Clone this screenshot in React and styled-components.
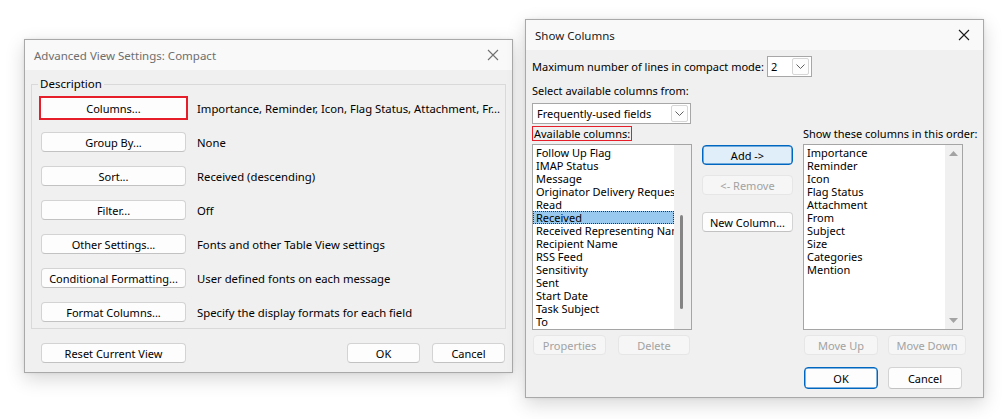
import React from 'react';
import styled, {createGlobalStyle, css} from 'styled-components';

const GlobalStyle = createGlobalStyle`
  * { box-sizing: border-box; }
  body {
    margin: 0;
    background: #ffffff;
    font-family: "Noto Sans", "Open Sans", sans-serif;
    font-size: 11px;
    color: #000;
  }
`;

const SETTINGS = [
  {label: 'Columns...', summary: 'Importance, Reminder, Icon, Flag Status, Attachment, Fr...', marked: true},
  {label: 'Group By...', summary: 'None'},
  {label: 'Sort...', summary: 'Received (descending)'},
  {label: 'Filter...', summary: 'Off'},
  {label: 'Other Settings...', summary: 'Fonts and other Table View settings'},
  {label: 'Conditional Formatting...', summary: 'User defined fonts on each message'},
  {label: 'Format Columns...', summary: 'Specify the display formats for each field'},
];

const AVAILABLE = [
  'Follow Up Flag',
  'IMAP Status',
  'Message',
  'Originator Delivery Requested',
  'Read',
  'Received',
  'Received Representing Name',
  'Recipient Name',
  'RSS Feed',
  'Sensitivity',
  'Sent',
  'Start Date',
  'Task Subject',
  'To',
];

const SHOWN = [
  'Importance',
  'Reminder',
  'Icon',
  'Flag Status',
  'Attachment',
  'From',
  'Subject',
  'Size',
  'Categories',
  'Mention',
];

const Desktop = styled.div`
  position: relative;
  width: 1008px;
  height: 419px;
  overflow: hidden;
  background: #fff;
`;

// dialogs are windows on the desktop, so they get placed by coordinates
const Window = styled.div`
  position: absolute;
  left: ${p => p.$left}px;
  top: ${p => p.$top}px;
  width: ${p => p.$width}px;
  height: ${p => p.$height}px;
  display: flex;
  flex-direction: column;
  background: #f0f0f0;
  border: 1px solid #a9a9a9;
  box-shadow: 0 6px 18px rgba(0, 0, 0, 0.16), 0 0 3px rgba(0, 0, 0, 0.08);
`;

const TitleBar = styled.div`
  height: 30px;
  flex: none;
  display: flex;
  align-items: center;
  justify-content: space-between;
  padding: 0 9px;
  background: #f9f9f9;
  color: ${p => (p.$inactive ? '#6e6e6e' : '#1a1a1a')};
  font-size: 11.5px;
`;

const CloseGlyph = styled.svg`
  width: 12px;
  height: 12px;
  margin-right: 4px;
  stroke: ${p => (p.$inactive ? '#707070' : '#1a1a1a')};
`;

const Close = ({inactive}) => (
  <CloseGlyph $inactive={inactive} viewBox="0 0 12 12">
    <path d="M1 1 L11 11 M11 1 L1 11" strokeWidth="1.1" fill="none" />
  </CloseGlyph>
);

const PushButton = styled.button`
  font: inherit;
  font-size: 11px;
  height: ${p => p.$h || 20}px;
  width: ${p => p.$w}px;
  margin-top: ${p => p.$mt || 0}px;
  padding: 0;
  flex: none;
  color: #000;
  background: #fdfdfd;
  border: 1px solid #d3d3d3;
  border-bottom-color: #c2c2c2;
  border-radius: 4px;
  line-height: 1;

  ${p =>
    p.$disabled &&
    css`
      color: #a2a2a2;
      background: #f6f6f6;
      border-color: #e6e6e6;
    `}

  ${p =>
    p.$default &&
    css`
      border: 1px solid #0067c0;
      box-shadow: inset 0 0 0 0.5px #0067c0;
    `}

  ${p =>
    p.$hover &&
    css`
      background: #e0eef9;
    `}

  ${p =>
    p.$marked &&
    css`
      outline: 2px solid #e51e2a;
      outline-offset: 0;
      border-radius: 0;
      border-color: #fff;
    `}
`;

/* ---------- Advanced View Settings ---------- */

const LeftBody = styled.div`
  flex: 1;
  display: flex;
  flex-direction: column;
  padding: 6px 6px 0 6px;
`;

const GroupBox = styled.fieldset`
  margin: 0;
  padding: 0;
  border: 1px solid #d9d9d9;
  min-width: 0;
`;

const Legend = styled.legend`
  margin-left: 6px;
  padding: 0 2px;
  line-height: 16px;
  font-size: 11.5px;
`;

const SettingList = styled.div`
  display: flex;
  flex-direction: column;
  gap: 14px;
  padding: 6px 0 6px 9px;
`;

const SettingRow = styled.div`
  display: flex;
  align-items: center;
  gap: 11px;
`;

const Summary = styled.span`
  white-space: nowrap;
  font-size: 11.3px;
`;

const LeftFooter = styled.div`
  display: flex;
  align-items: center;
  margin-top: 14px;
  padding: 0 1px 0 10px;
  gap: 12px;
`;

const Spacer = styled.div`
  flex: 1;
`;

function AdvancedViewSettings() {
  return (
    <Window $left={24} $top={39} $width={489} $height={334}>
      <TitleBar $inactive>
        <span>Advanced View Settings: Compact</span>
        <Close inactive />
      </TitleBar>
      <LeftBody>
        <GroupBox>
          <Legend>Description</Legend>
          <SettingList>
            {SETTINGS.map(item => (
              <SettingRow key={item.label}>
                <PushButton $w={145} $marked={item.marked}>
                  {item.label}
                </PushButton>
                <Summary>{item.summary}</Summary>
              </SettingRow>
            ))}
          </SettingList>
        </GroupBox>
        <LeftFooter>
          <PushButton $w={145}>Reset Current View</PushButton>
          <Spacer />
          <PushButton $w={73}>OK</PushButton>
          <PushButton $w={73}>Cancel</PushButton>
        </LeftFooter>
      </LeftBody>
    </Window>
  );
}

/* ---------- Show Columns ---------- */

const RightBody = styled.div`
  flex: 1;
  display: flex;
  flex-direction: column;
  padding: 6px 6px 0 6px;
`;

const LineRow = styled.div`
  display: flex;
  align-items: center;
  height: ${p => p.$h}px;
  margin-top: ${p => p.$mt || 0}px;
  white-space: nowrap;
`;

const Combo = styled.div`
  width: ${p => p.$w}px;
  height: 21px;
  margin-left: ${p => p.$ml || 0}px;
  display: flex;
  align-items: center;
  justify-content: space-between;
  padding: 0 2px 0 ${p => p.$pl || 4}px;
  background: #fff;
  border: 1px solid #a7a7a7;
`;

const ComboArrow = styled.div`
  width: 17px;
  height: 17px;
  display: flex;
  align-items: center;
  justify-content: center;
  border: 1px solid #d6d6d6;
  border-radius: 2px;
  background: #fdfdfd;
`;

const Chevron = () => (
  <svg width="9" height="5" viewBox="0 0 9 5">
    <path d="M0.5 0.5 L4.5 4.5 L8.5 0.5" stroke="#606060" strokeWidth="1" fill="none" />
  </svg>
);

const Columns = styled.div`
  display: grid;
  grid-template-columns: 160px 91px 160px;
  column-gap: 10px;
  margin-top: ${p => p.$mt || 0}px;
`;

const MarkedLabel = styled.span`
  justify-self: start;
  height: 15px;
  line-height: 13px;
  padding: 0 1px;
  border: 1px solid #e51e2a;
`;

const PlainLabel = styled.span`
  line-height: 15px;
  white-space: nowrap;
`;

const ListBox = styled.div`
  height: 186px;
  display: grid;
  grid-template-columns: 1fr 17px;
  background: #fff;
  border: 1px solid #a5a5a5;
  overflow: hidden;
`;

const Items = styled.div`
  padding-top: 1px;
  overflow: hidden;
`;

const Item = styled.div`
  height: 13px;
  line-height: 13px;
  padding-left: 3px;
  white-space: nowrap;

  ${p =>
    p.$selected &&
    css`
      background: #99c9ef;
      outline: 1px dotted #333;
      outline-offset: -1px;
    `}
`;

const Track = styled.div`
  position: relative;
  background: #f0f0f0;
`;

// scroll thumb floats over its track
const Thumb = styled.div`
  position: absolute;
  left: 6px;
  top: ${p => p.$top}px;
  width: 3px;
  height: ${p => p.$height}px;
  border-radius: 2px;
  background: #858585;
`;

const ArrowTrack = styled.div`
  display: flex;
  flex-direction: column;
  justify-content: space-between;
  align-items: center;
  padding: 6px 0;
  background: #f0f0f0;
`;

const Triangle = ({down}) => (
  <svg width="9" height="5" viewBox="0 0 9 5">
    <path d={down ? 'M0 0 L9 0 L4.5 5 Z' : 'M0 5 L9 5 L4.5 0 Z'} fill="#a3a3a3" />
  </svg>
);

const ActionStack = styled.div`
  display: flex;
  flex-direction: column;
  padding-top: 1px;
`;

const ButtonPair = styled.div`
  display: flex;
  gap: ${p => p.$gap}px;
  padding-left: 1px;
`;

function ShowColumns() {
  return (
    <Window $left={525} $top={19} $width={459} $height={379}>
      <TitleBar>
        <span>Show Columns</span>
        <Close />
      </TitleBar>
      <RightBody>
        <LineRow $h={21}>
          <span>Maximum number of lines in compact mode:</span>
          <Combo $w={45} $ml={3} $pl={3}>
            <span>2</span>
            <ComboArrow>
              <Chevron />
            </ComboArrow>
          </Combo>
        </LineRow>
        <LineRow $h={15} $mt={6}>
          <span>Select available columns from:</span>
        </LineRow>
        <LineRow $h={21} $mt={5}>
          <Combo $w={159}>
            <span>Frequently-used fields</span>
            <ComboArrow>
              <Chevron />
            </ComboArrow>
          </Combo>
        </LineRow>
        <Columns $mt={2}>
          <MarkedLabel>Available columns:</MarkedLabel>
          <span />
          <PlainLabel>Show these columns in this order:</PlainLabel>
        </Columns>
        <Columns $mt={3}>
          <ListBox>
            <Items>
              {AVAILABLE.map(name => (
                <Item key={name} $selected={name === 'Received'}>
                  {name}
                </Item>
              ))}
            </Items>
            <Track>
              <Thumb $top={70} $height={94} />
            </Track>
          </ListBox>
          <ActionStack>
            <PushButton $w={91} $default $hover>
              Add -&gt;
            </PushButton>
            <PushButton $w={91} $mt={10} $disabled>
              &lt;- Remove
            </PushButton>
            <PushButton $w={91} $mt={17}>
              New Column...
            </PushButton>
          </ActionStack>
          <ListBox>
            <Items>
              {SHOWN.map(name => (
                <Item key={name}>{name}</Item>
              ))}
            </Items>
            <ArrowTrack>
              <Triangle />
              <Triangle down />
            </ArrowTrack>
          </ListBox>
        </Columns>
        <Columns $mt={5}>
          <ButtonPair $gap={12}>
            <PushButton $w={73} $disabled>
              Properties
            </PushButton>
            <PushButton $w={72} $disabled>
              Delete
            </PushButton>
          </ButtonPair>
          <span />
          <ButtonPair $gap={10}>
            <PushButton $w={74} $disabled>
              Move Up
            </PushButton>
            <PushButton $w={78} $disabled>
              Move Down
            </PushButton>
          </ButtonPair>
        </Columns>
        <Columns $mt={12}>
          <span />
          <span />
          <ButtonPair $gap={10}>
            <PushButton $w={74} $h={22} $default>
              OK
            </PushButton>
            <PushButton $w={74} $h={22}>
              Cancel
            </PushButton>
          </ButtonPair>
        </Columns>
      </RightBody>
    </Window>
  );
}

export default function App() {
  return (
    <>
      <GlobalStyle />
      <Desktop>
        <AdvancedViewSettings />
        <ShowColumns />
      </Desktop>
    </>
  );
}
